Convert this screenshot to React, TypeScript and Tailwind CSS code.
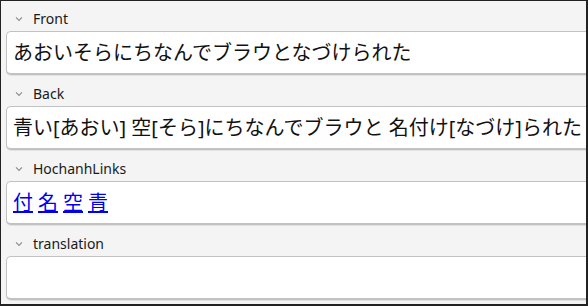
import React from "react";

const Chevron = () => (
  <svg width="8" height="6" viewBox="0 0 8 6" className="shrink-0">
    <path d="M1 1.4 L4 4.4 L7 1.4" fill="none" stroke="#8a8a8a" strokeWidth="1.1" />
  </svg>
);

const Field = ({ label, children }: { label: string; children?: React.ReactNode }) => (
  <div className="flex flex-col">
    <div className="h-[26px] flex items-center pl-[14px] gap-[10px] pt-[2px]">
      <Chevron />
      <span className="text-[14px] text-[#1a1a1a] leading-none" style={{ fontFamily: '"Noto Sans", sans-serif' }}>
        {label}
      </span>
    </div>
    <div className="ml-[5px] mr-[-12px] h-[44px] bg-white border-l border-t border-b-2 border-[#c2c2c2] rounded-l-[5px] flex items-center pl-[6px] shadow-[0_1px_0_#e2e2e2]">
      <div
        className="text-[20px] text-[#111] whitespace-nowrap leading-none"
        style={{ fontFamily: '"Noto Sans", "Noto Sans CJK JP", sans-serif' }}
      >
        {children}
      </div>
    </div>
  </div>
);

export default function App() {
  const links = ["付", "名", "空", "青"];
  return (
    <div className="w-[588px] h-[306px] bg-[#f4f4f4] border-t border-l border-r-2 border-b-2 border-[#222] overflow-hidden">
      <div className="flex flex-col gap-[5px] pt-[4px]">
        <Field label="Front">あおいそらにちなんでブラウとなづけられた</Field>
        <Field label="Back">青い[あおい] 空[そら]にちなんでブラウと 名付け[なづけ]られた</Field>
        <Field label="HochanhLinks">
          <span className="flex gap-[5px]">
            {links.map((c) => (
              <a key={c} href="#" className="text-[#0000ee] underline">
                {c}
              </a>
            ))}
          </span>
        </Field>
        <Field label="translation" />
      </div>
    </div>
  );
}
